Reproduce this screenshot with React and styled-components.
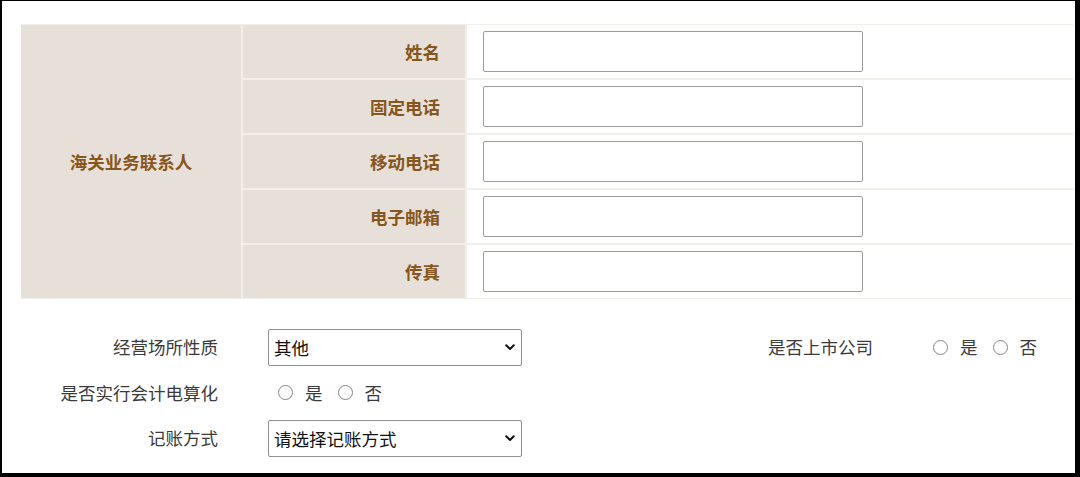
import React from "react";
import styled, { createGlobalStyle } from "styled-components";

const Global = createGlobalStyle`
  html, body { margin: 0; padding: 0; background: #fff; }
  body { font-family: "Noto Sans CJK SC", "Noto Sans", sans-serif; }
  * { box-sizing: border-box; }
`;

const Frame = styled.div`
  width: 1080px;
  height: 477px;
  border-style: solid;
  border-color: #000;
  border-width: 1px 5px 4px 2px;
  padding: 23px 2px 0 19px;
  background: #fff;
`;

const ContactTable = styled.div`
  display: grid;
  grid-template-columns: 220px 222px 1fr;
  grid-template-rows: repeat(5, 53px);
  gap: 2px;
  padding: 1px 0;
  background: #f2efeb;
`;

const GroupCell = styled.div`
  grid-row: 1 / span 5;
  background: #e7e0d9;
  display: flex;
  align-items: center;
  justify-content: center;
  color: #87561c;
  font-weight: 700;
  font-size: 17.5px;
  line-height: 1;
`;

const LabelCell = styled.div`
  background: #e7e0d9;
  display: flex;
  align-items: center;
  justify-content: flex-end;
  padding-right: 25px;
  color: #87561c;
  font-weight: 700;
  font-size: 17.5px;
  line-height: 1;
`;

const FieldCell = styled.div`
  background: #fff;
  display: flex;
  align-items: center;
  padding-left: 16px;
`;

const TextInput = styled.input`
  width: 380px;
  height: 41px;
  border: 1px solid #9c9c9c;
  border-radius: 2px;
  background: #fff;
  outline: none;
  font-size: 16px;
  padding: 0 6px;
`;

const InfoGrid = styled.div`
  margin-top: 30px;
  display: grid;
  grid-template-columns: 197px 254px 301px 1fr;
  grid-auto-rows: 36px;
  column-gap: 50px;
  row-gap: 9.5px;
  align-items: center;
`;

const InfoLabel = styled.div`
  grid-column: ${(p) => p.col || 1};
  text-align: right;
  color: #3a3a3a;
  font-size: 17.5px;
  line-height: 1;
  white-space: nowrap;
`;

const SelectBox = styled.div`
  grid-column: 2;
  position: relative;
  width: 254px;
  height: 37px;
`;

const Select = styled.select`
  appearance: none;
  -webkit-appearance: none;
  width: 100%;
  height: 100%;
  border: 1px solid #8f8f8f;
  border-radius: 2px;
  background: #fff;
  color: #111;
  font-family: "Noto Sans CJK SC", "Noto Sans", sans-serif;
  font-size: 17.5px;
  padding: 0 24px 0 5px;
  outline: none;
`;

const Chevron = styled.svg`
  position: absolute;
  right: 7px;
  top: 50%;
  width: 10px;
  height: 7px;
  margin-top: -3px;
  pointer-events: none;
`;

const RadioGroup = styled.div`
  grid-column: ${(p) => p.col || 2};
  display: flex;
  align-items: center;
`;

const RadioOption = styled.label`
  display: flex;
  align-items: center;
  margin-left: ${(p) => (p.first ? "10px" : "15px")};
  color: #3a3a3a;
  font-size: 17.5px;
  line-height: 1;
  cursor: pointer;
`;

const HiddenRadio = styled.input.attrs({ type: "radio" })`
  position: absolute;
  opacity: 0;
  width: 0;
  height: 0;
  margin: 0;
`;

const RadioCircle = styled.span`
  display: inline-block;
  flex: 0 0 15px;
  width: 15px;
  height: 15px;
  margin-right: 12px;
  border: 1px solid #858585;
  border-radius: 50%;
  background: #fff;
`;

const contactFields = ["姓名", "固定电话", "移动电话", "电子邮箱", "传真"];

function YesNo({ name, col }) {
  return (
    <RadioGroup col={col}>
      <RadioOption first>
        <HiddenRadio name={name} />
        <RadioCircle />是
      </RadioOption>
      <RadioOption>
        <HiddenRadio name={name} />
        <RadioCircle />否
      </RadioOption>
    </RadioGroup>
  );
}

function Dropdown({ value, label }) {
  return (
    <SelectBox>
      <Select defaultValue={value}>
        <option value={value}>{label}</option>
      </Select>
      <Chevron viewBox="0 0 10 7">
        <path d="M1.2 1.3 L5 5 L8.8 1.3" fill="none" stroke="#111" strokeWidth="2" strokeLinecap="round" strokeLinejoin="round" />
      </Chevron>
    </SelectBox>
  );
}

export default function App() {
  return (
    <>
      <Global />
      <Frame>
        <ContactTable>
          <GroupCell>海关业务联系人</GroupCell>
          {contactFields.map((f) => (
            <React.Fragment key={f}>
              <LabelCell>{f}</LabelCell>
              <FieldCell>
                <TextInput type="text" />
              </FieldCell>
            </React.Fragment>
          ))}
        </ContactTable>
        <InfoGrid>
          <InfoLabel>经营场所性质</InfoLabel>
          <Dropdown value="other" label="其他" />
          <InfoLabel col={3}>是否上市公司</InfoLabel>
          <YesNo name="listed" col={4} />

          <InfoLabel>是否实行会计电算化</InfoLabel>
          <YesNo name="computerized" col={2} />

          <InfoLabel>记账方式</InfoLabel>
          <Dropdown value="" label="请选择记账方式" />
        </InfoGrid>
      </Frame>
    </>
  );
}
